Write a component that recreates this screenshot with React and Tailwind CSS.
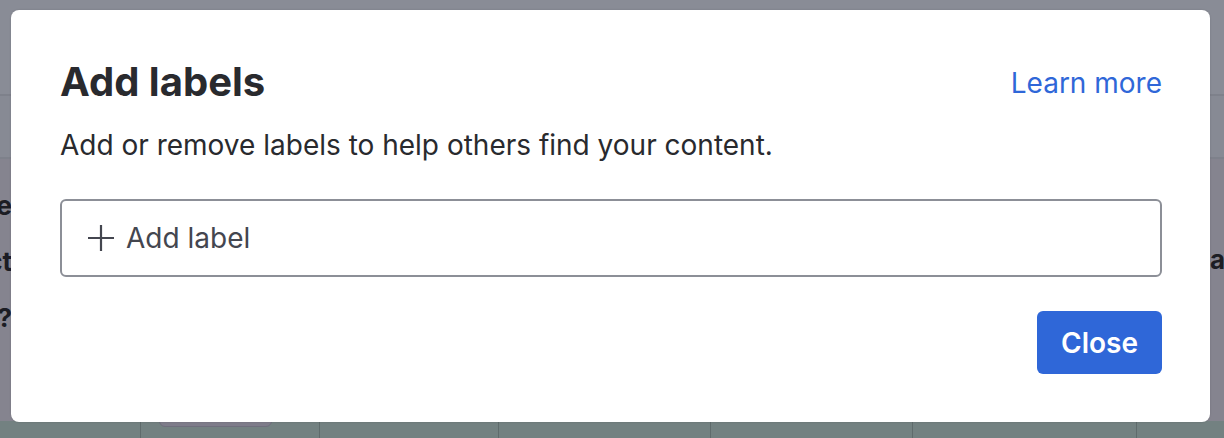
const PlusIcon = () => (
  <svg width="30" height="30" viewBox="0 0 30 30" fill="none" aria-hidden="true">
    <path d="M15 2v26M2 15h26" stroke="#44464f" strokeWidth="2.2" />
  </svg>
);

const Backdrop = () => (
  <div className="absolute inset-0 flex flex-col bg-[#878893]">
    <div className="h-[96px] border-b-2 border-[#7e818b] bg-[#898c96]" />
    <div className="h-[63px] border-b-2 border-[#7e818b] bg-[#878a94]" />
    <div className="relative flex-1 bg-[#85848f]">
      <div className="absolute right-[1212px] top-[27px] whitespace-nowrap font-['Inter'] text-[26px] font-bold text-[#1c1d24]">
        <div className="h-[56px] text-right">Type</div>
        <div className="h-[56px] text-right">Project</div>
        <div className="text-right">Tim, anything else?</div>
      </div>
      <div className="absolute left-[1178px] top-[81px] whitespace-nowrap font-['Inter'] text-[26px] font-bold text-[#1c1d24]">
        Year
      </div>
    </div>
    <div className="relative flex h-[17px] bg-[#738181]">
      <div className="w-[141px] border-r border-[#5f6b6c]" />
      <div className="w-[179px] border-r border-[#5f6b6c]" />
      <div className="w-[179px] border-r border-[#5f6b6c]" />
      <div className="w-[212px] border-r border-[#5f6b6c]" />
      <div className="w-[202px] border-r border-[#5f6b6c]" />
      <div className="w-[224px] border-r border-[#5f6b6c]" />
      <div className="absolute left-[159px] top-[-4px] h-[10px] w-[113px] rounded-b-[6px] border border-[#6f6e7c] bg-[#7e7c8a]" />
    </div>
  </div>
);

export default function App() {
  return (
    <div className="relative h-[438px] w-[1224px] overflow-hidden font-['Inter',sans-serif]">
      <Backdrop />
      <div className="absolute left-[11px] top-[10px] flex h-[412px] w-[1199px] flex-col rounded-[8px] bg-white pb-[48px] pl-[49px] pr-[48px] pt-[48px] shadow-[0_0_2px_rgba(0,0,0,0.15)]">
        <div className="flex items-center justify-between">
          <h1 className="text-[40px] font-bold leading-[48px] text-[#292a2e]">Add labels</h1>
          <a href="#" className="mt-[2px] text-[28px] leading-[40px] text-[#2f67d8]">
            Learn more
          </a>
        </div>
        <p className="mt-[19px] text-[28px] leading-[40px] text-[#292a2e]">
          Add or remove labels to help others find your content.
        </p>
        <div className="mt-[34px] flex h-[78px] items-center gap-[10px] rounded-[6px] border-2 border-[#8c8f97] px-[24px]">
          <PlusIcon />
          <span className="text-[28px] leading-[40px] text-[#44464f]">Add label</span>
        </div>
        <div className="mt-auto flex justify-end">
          <button
            type="button"
            className="h-[63px] rounded-[6px] bg-[#2f67d8] px-[24px] text-[28px] font-semibold text-white"
          >
            Close
          </button>
        </div>
      </div>
    </div>
  );
}
